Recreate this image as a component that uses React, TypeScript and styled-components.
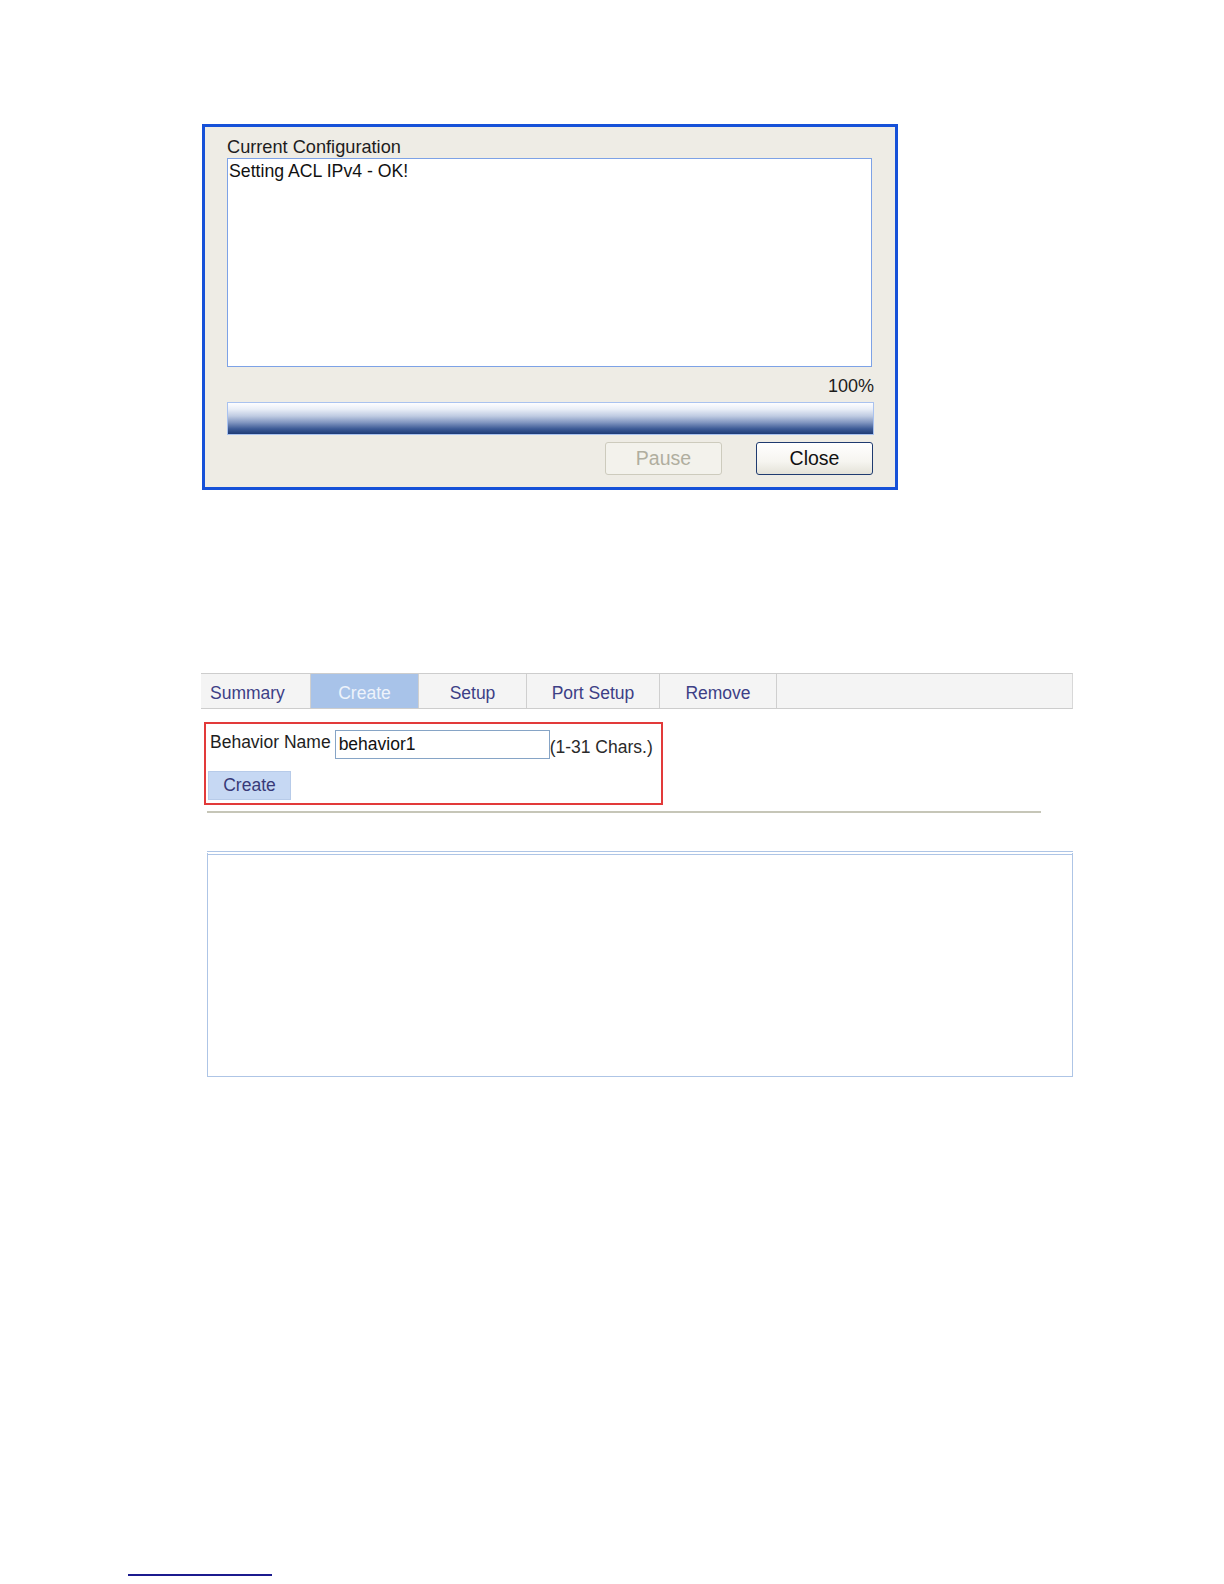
import React from "react";
import styled, { createGlobalStyle } from "styled-components";

const Global = createGlobalStyle`
  html, body { margin: 0; padding: 0; background: #ffffff; }
  body { font-family: "Liberation Sans", Arial, sans-serif; }
  * { box-sizing: border-box; }
`;

const Page = styled.div`
  width: 1224px;
  min-height: 1584px;
  padding-top: 124px;
  display: flex;
  flex-direction: column;
`;

/* ---------- dialog ---------- */
const Dialog = styled.div`
  margin-left: 202px;
  width: 696px;
  height: 366px;
  border: 3px solid #1651d8;
  background: #eeece5;
  padding: 7px 21px 0 22px;
  display: flex;
  flex-direction: column;
`;

const DialogLabel = styled.div`
  font-size: 18.2px;
  line-height: 26px;
  height: 24px;
  color: #1d1d1d;
`;

const LogBox = styled.div`
  height: 209px;
  margin-right: 2px;
  background: #ffffff;
  border: 1px solid #7da2e6;
  padding: 1px 1px;
  font-size: 17.7px;
  line-height: 22px;
  color: #111;
`;

const Percent = styled.div`
  margin-top: 8px;
  text-align: right;
  font-size: 18px;
  line-height: 22px;
  color: #1c1c1c;
`;

const Progress = styled.div`
  margin-top: 5px;
  height: 33px;
  border: 1px solid #a9c2ef;
  background: linear-gradient(
    to bottom,
    #fdfdff 0%,
    #e9eef7 20%,
    #bfcbe2 42%,
    #8196c0 63%,
    #3e5c97 83%,
    #1e3b76 100%
  );
`;

const ButtonRow = styled.div`
  margin-top: 7px;
  display: flex;
  justify-content: flex-end;
  gap: 34px;
  padding-right: 1px;
`;

const DlgButton = styled.button<{ $disabled?: boolean }>`
  width: 117px;
  height: 33px;
  font-family: "Liberation Sans", Arial, sans-serif;
  font-size: 19.5px;
  border-radius: 3px;
  padding: 0;
  color: ${(p) => (p.$disabled ? "#b0ae9f" : "#111")};
  border: 1px solid ${(p) => (p.$disabled ? "#cdcbbd" : "#1f3b70")};
  background: ${(p) =>
    p.$disabled
      ? "#f3f2ec"
      : "linear-gradient(to bottom, #ffffff 0%, #f6f5f0 60%, #e4e2d8 100%)"};
`;

/* ---------- web page part ---------- */
const TabBar = styled.div`
  margin-top: 183px;
  margin-left: 201px;
  width: 872px;
  height: 36px;
  display: flex;
  background: #f4f4f4;
  border-top: 1px solid #cdcdcd;
  border-bottom: 1px solid #cdcdcd;
  border-right: 1px solid #d8d8d8;
`;

const Tab = styled.div<{ $active?: boolean; $w: number; $first?: boolean }>`
  width: ${(p) => p.$w}px;
  height: 100%;
  display: flex;
  align-items: center;
  justify-content: ${(p) => (p.$first ? "flex-start" : "center")};
  padding-left: ${(p) => (p.$first ? "9px" : "0")};
  padding-top: 4px;
  font-size: 17.5px;
  color: ${(p) => (p.$active ? "#eef3fb" : "#3d3f86")};
  background: ${(p) => (p.$active ? "#a8c3e9" : "transparent")};
  border-right: 1px solid #cfcfcf;
`;

const FormBox = styled.div`
  margin-top: 13px;
  margin-left: 204px;
  width: 459px;
  height: 83px;
  border: 2px solid #e23a3a;
  padding: 6px 0 0 2px;
  display: flex;
  flex-direction: column;
  gap: 10px;
`;

const FieldRow = styled.div`
  display: flex;
  align-items: flex-start;
  font-size: 17.5px;
  color: #1e1e1e;
`;

const FieldLabel = styled.span`
  line-height: 28px;
  margin-left: 2px;
  margin-right: 4px;
  margin-top: -2px;
`;

const TextInput = styled.div`
  width: 215px;
  height: 29px;
  border: 1px solid #86a4c6;
  background: #fff;
  padding-left: 3px;
  line-height: 27px;
  color: #111;
`;

const Hint = styled.span`
  line-height: 28px;
  margin-top: 3px;
  color: #2a2a2a;
`;

const SmallButton = styled.div`
  width: 83px;
  height: 29px;
  background: #c6d8f3;
  border: 1px solid #b7cbe9;
  display: flex;
  align-items: center;
  justify-content: center;
  font-size: 17.5px;
  color: #383a78;
`;

const Divider = styled.div`
  margin-top: 6px;
  margin-left: 207px;
  width: 834px;
  height: 2px;
  background: #c6c6b8;
`;

const ResultPanel = styled.div`
  margin-top: 38px;
  margin-left: 207px;
  width: 866px;
  height: 226px;
  border: 1px solid #aec5e6;
  border-top: 4px double #aec5e6;
  background: #ffffff;
`;

const Footnote = styled.div`
  margin-top: 497px;
  margin-left: 128px;
  width: 144px;
  height: 2px;
  background: #1b1a8e;
`;

export default function App() {
  const tabs = [
    { label: "Summary", w: 110, first: true },
    { label: "Create", w: 108, active: true },
    { label: "Setup", w: 108 },
    { label: "Port Setup", w: 133 },
    { label: "Remove", w: 117 },
  ];
  return (
    <>
      <Global />
      <Page>
        <Dialog>
          <DialogLabel>Current Configuration</DialogLabel>
          <LogBox>Setting ACL IPv4 - OK!</LogBox>
          <Percent>100%</Percent>
          <Progress />
          <ButtonRow>
            <DlgButton $disabled>Pause</DlgButton>
            <DlgButton>Close</DlgButton>
          </ButtonRow>
        </Dialog>

        <TabBar>
          {tabs.map((t) => (
            <Tab key={t.label} $w={t.w} $active={t.active} $first={t.first}>
              {t.label}
            </Tab>
          ))}
        </TabBar>

        <FormBox>
          <FieldRow>
            <FieldLabel>Behavior Name</FieldLabel>
            <TextInput>behavior1</TextInput>
            <Hint>(1-31 Chars.)</Hint>
          </FieldRow>
          <SmallButton>Create</SmallButton>
        </FormBox>

        <Divider />
        <ResultPanel />
        <Footnote />
      </Page>
    </>
  );
}
